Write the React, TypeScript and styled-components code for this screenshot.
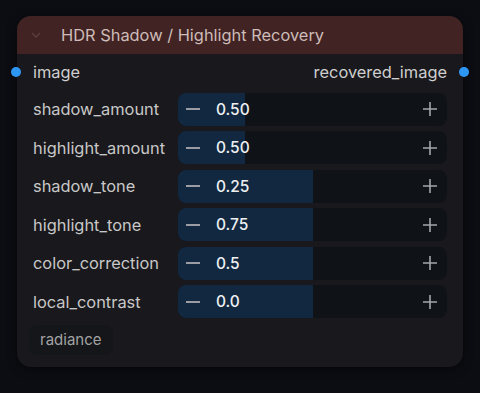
import styled, { createGlobalStyle } from "styled-components";

const GlobalStyle = createGlobalStyle`
  html, body {
    margin: 0;
    padding: 0;
    background: #0b0d12;
    font-family: Inter, "Noto Sans", sans-serif;
  }
`;

const Page = styled.div`
  width: 480px;
  height: 393px;
  padding: 16px 17px 0 17px;
  box-sizing: border-box;
`;

const Node = styled.div`
  width: 446px;
  height: 351px;
  background: #19181c;
  border-radius: 14px;
  box-shadow: 0 2px 10px rgba(0, 0, 0, 0.5);
  display: flex;
  flex-direction: column;
`;

const Header = styled.div`
  height: 38px;
  background: #412323;
  border-radius: 14px 14px 0 0;
  display: flex;
  align-items: center;
  padding: 0 12px;
  gap: 18px;
  color: #cdbcb8;
  font-size: 16.4px;
`;

const Body = styled.div`
  display: flex;
  flex-direction: column;
  padding: 7px 16px 0 16px;
`;

const IORow = styled.div`
  height: 22px;
  display: flex;
  justify-content: space-between;
  align-items: center;
  color: #cfcfcf;
  font-size: 16.4px;
  margin-bottom: 4px;
`;

const Slot = styled.div<{ $right?: boolean }>`
  display: flex;
  align-items: center;
  position: relative;
  &::before {
    content: "";
    position: absolute;
    top: 50%;
    ${(p) => (p.$right ? "right: -22px;" : "left: -22px;")}
    width: 10px;
    height: 10px;
    margin-top: -5px;
    border-radius: 50%;
    background: #2e97f5;
  }
`;

const WidgetRow = styled.div`
  display: flex;
  align-items: center;
  height: 33px;
  margin-top: 5.5px;
`;

const Label = styled.div`
  width: 145px;
  color: #c8c8c8;
  font-size: 16.4px;
`;

const Slider = styled.div`
  position: relative;
  flex: 1;
  height: 33px;
  background: #0f1217;
  border-radius: 8px;
  overflow: hidden;
  display: flex;
  align-items: center;
`;

const Fill = styled.div`
  position: absolute;
  left: 0;
  top: 0;
  bottom: 0;
  background: #112840;
`;

const Minus = styled.div`
  position: relative;
  width: 14px;
  height: 2px;
  background: #9a9ea4;
  margin-left: 8px;
`;

const Value = styled.div`
  position: relative;
  margin-left: 16px;
  color: #eef0f2;
  font-size: 15.5px;
  font-weight: 500;
  flex: 1;
`;

const Plus = styled.svg`
  position: relative;
  margin-right: 9px;
`;

const Badge = styled.div`
  align-self: flex-start;
  margin: 7px 0 0 -4px;
  padding: 5px 11px 6px 11px;
  background: #14161a;
  border-radius: 7px;
  color: #a3a3a3;
  font-size: 15px;
`;

const widgets = [
  { name: "shadow_amount", value: "0.50", fill: 25 },
  { name: "highlight_amount", value: "0.50", fill: 25 },
  { name: "shadow_tone", value: "0.25", fill: 50 },
  { name: "highlight_tone", value: "0.75", fill: 50 },
  { name: "color_correction", value: "0.5", fill: 50 },
  { name: "local_contrast", value: "0.0", fill: 50 },
];

export default function App() {
  return (
    <Page>
      <GlobalStyle />
      <Node>
        <Header>
          <svg width="14" height="10" viewBox="0 0 14 10">
            <path d="M3 3 L7 7 L11 3" stroke="#5a3a3a" strokeWidth="1.6" fill="none" />
          </svg>
          HDR Shadow / Highlight Recovery
        </Header>
        <Body>
          <IORow>
            <Slot>image</Slot>
            <Slot $right>recovered_image</Slot>
          </IORow>
          {widgets.map((w) => (
            <WidgetRow key={w.name}>
              <Label>{w.name}</Label>
              <Slider>
                <Fill style={{ width: `${w.fill}%` }} />
                <Minus />
                <Value>{w.value}</Value>
                <Plus width="16" height="16" viewBox="0 0 16 16">
                  <path d="M8 1 V15 M1 8 H15" stroke="#a4a7ab" strokeWidth="1.6" />
                </Plus>
              </Slider>
            </WidgetRow>
          ))}
          <Badge>radiance</Badge>
        </Body>
      </Node>
    </Page>
  );
}
